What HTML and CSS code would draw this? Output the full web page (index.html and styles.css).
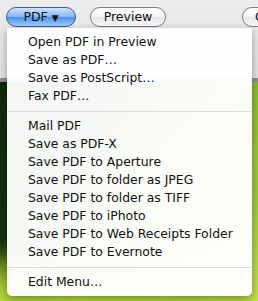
FILE: index.html
```html
<!DOCTYPE html>
<html lang="en">
<head>
    <meta charset="UTF-8">
    <meta name="viewport" content="width=device-width, initial-scale=1.0">
    <title>PDF Menu</title>
    <link rel="stylesheet" href="styles.css">
</head>
<body>
    <div class="scene">
        <div class="window">
            <div class="toolbar">
                <button class="btn btn-blue">PDF <span class="arrow">&#9660;</span></button>
                <button class="btn btn-preview">Preview</button>
                <button class="btn btn-cut">Cancel</button>
            </div>
        </div>
        <div class="desktop"></div>

        <div class="menu">
            <div class="menu-item">Open PDF in Preview</div>
            <div class="menu-item">Save as PDF…</div>
            <div class="menu-item">Save as PostScript…</div>
            <div class="menu-item">Fax PDF…</div>
            <div class="menu-sep"></div>
            <div class="menu-item">Mail PDF</div>
            <div class="menu-item">Save as PDF-X</div>
            <div class="menu-item">Save PDF to Aperture</div>
            <div class="menu-item">Save PDF to folder as JPEG</div>
            <div class="menu-item">Save PDF to folder as TIFF</div>
            <div class="menu-item">Save PDF to iPhoto</div>
            <div class="menu-item">Save PDF to Web Receipts Folder</div>
            <div class="menu-item">Save PDF to Evernote</div>
            <div class="menu-sep"></div>
            <div class="menu-item">Edit Menu…</div>
        </div>
    </div>
</body>
</html>
```

FILE: styles.css
```css
html, body {
    margin: 0;
    padding: 0;
}
body {
    font-family: "DejaVu Sans", "Liberation Sans", sans-serif;
    overflow: hidden;
}
.scene {
    position: relative;
    width: 258px;
    height: 301px;
    overflow: hidden;
}
.window {
    height: 78px;
    background: linear-gradient(#ececec, #e2e2e2);
    border-bottom: 4px solid #8e8e8e;
}
.toolbar {
    display: flex;
    align-items: center;
    gap: 14px;
    padding: 7px 0 0 6px;
    white-space: nowrap;
}
.btn {
    flex: none;
    box-sizing: border-box;
    height: 20px;
    padding: 0;
    border: 1px solid #7b7b7b;
    border-radius: 10px;
    background: linear-gradient(#ffffff, #f4f4f4 50%, #e6e6e6 51%, #fafafa);
    font-family: "DejaVu Sans", sans-serif;
    font-size: 12.5px;
    color: #111;
    line-height: 18px;
    white-space: nowrap;
}
.btn-blue {
    width: 70px;
    border-color: #3a5a9c;
    background: linear-gradient(#cfe3fb, #84b6f1 50%, #4a90e8 51%, #9fd0fb);
}
.btn-preview {
    width: 76px;
}
.arrow {
    font-size: 9px;
}
.btn-cut {
    width: 70px;
    margin-left: 62px;
    padding-left: 12px;
    text-align: left;
}
.desktop {
    height: 219px;
    background:
        radial-gradient(ellipse 70% 22% at 0% 100%, #b4d83a 0%, rgba(150, 200, 40, 0) 100%),
        radial-gradient(ellipse 80% 30% at 30% 100%, #b6dc3c 0%, rgba(150, 200, 40, 0) 100%),
        radial-gradient(ellipse at 100% 100%, #c3e04a 0%, #9bc832 35%, rgba(90, 150, 20, 0) 70%),
        linear-gradient(100deg, #0c2a08 0%, #1c4a10 30%, #5e9a1e 60%, #9ccc36 100%);
}
.menu {
    position: absolute;
    left: 7px;
    top: 28px;
    width: 245px;
    padding: 5px 0 5px;
    background: rgba(255, 255, 255, 0.96);
    border-radius: 0 0 5px 5px;
    box-shadow: 0 3px 8px rgba(0, 0, 0, 0.35);
}
.menu-item {
    height: 18px;
    line-height: 18px;
    padding-left: 21px;
    font-size: 12.4px;
    color: #111;
    white-space: nowrap;
}
.menu-sep {
    height: 1px;
    margin: 6px 0 5px;
    background: #dcdcdc;
}
```
